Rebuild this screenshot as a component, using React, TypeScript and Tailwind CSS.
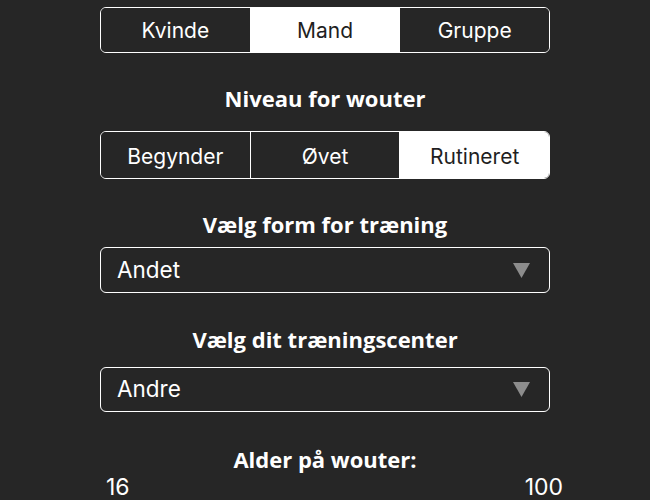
import { useState } from 'react';

const headingFont = { fontFamily: '"Open Sans", Lato, sans-serif' };

type SegmentedProps = {
  options: string[];
  value: number;
  onChange: (i: number) => void;
  className?: string;
};

const Segmented = ({ options, value, onChange, className = '' }: SegmentedProps) => (
  <div
    className={`flex w-[450px] overflow-hidden rounded-[6px] border-[1.5px] border-white ${className}`}
  >
    {options.map((opt, i) => (
      <button
        key={opt}
        onClick={() => onChange(i)}
        className={`flex-1 flex items-center justify-center pt-[2px] text-[21px] ${
          i > 0 ? 'border-l-[1.5px] border-white' : ''
        } ${i === value ? 'bg-white text-[#1f1f1f]' : 'bg-[#262626] text-white'}`}
      >
        {opt}
      </button>
    ))}
  </div>
);

const Dropdown = ({ label, className = '' }: { label: string; className?: string }) => (
  <div
    className={`flex h-[48px] w-[450px] items-center justify-between rounded-[6px] border-[1.5px] border-white pl-[16px] pr-[19px] ${className}`}
  >
    <span className="text-[22.5px] text-white">{label}</span>
    <svg width="17" height="15" viewBox="0 0 17 15">
      <path d="M0 0 H17 L8.5 15 Z" fill="#8c8c8c" />
    </svg>
  </div>
);

const Heading = ({ children, className = '' }: { children: string; className?: string }) => (
  <h2
    style={headingFont}
    className={`h-[30px] text-center text-[22px] leading-[30px] font-bold text-white ${className}`}
  >
    {children}
  </h2>
);

export default function App() {
  const [gender, setGender] = useState(1);
  const [level, setLevel] = useState(2);

  return (
    <div
      className="flex h-[500px] w-[650px] flex-col items-center overflow-hidden bg-[#262626]"
      style={{ fontFamily: 'Inter, "Liberation Sans", sans-serif' }}
    >
      <Segmented
        options={['Kvinde', 'Mand', 'Gruppe']}
        value={gender}
        onChange={setGender}
        className="mt-[7px] h-[49px]"
      />

      <Heading className="mt-[30px]">Niveau for wouter</Heading>
      <Segmented
        options={['Begynder', 'Øvet', 'Rutineret']}
        value={level}
        onChange={setLevel}
        className="mt-[18px] h-[51px]"
      />

      <Heading className="mt-[30px]">Vælg form for træning</Heading>
      <Dropdown label="Andet" className="mt-[8px]" />

      <Heading className="mt-[31px]">Vælg dit træningscenter</Heading>
      <Dropdown label="Andre" className="mt-[13px]" />

      <Heading className="mt-[32px]">Alder på wouter:</Heading>
      <div className="flex w-[650px] justify-between pl-[106px] pr-[87px] text-[23px] leading-[26px] text-white">
        <span>16</span>
        <span>100</span>
      </div>
    </div>
  );
}
